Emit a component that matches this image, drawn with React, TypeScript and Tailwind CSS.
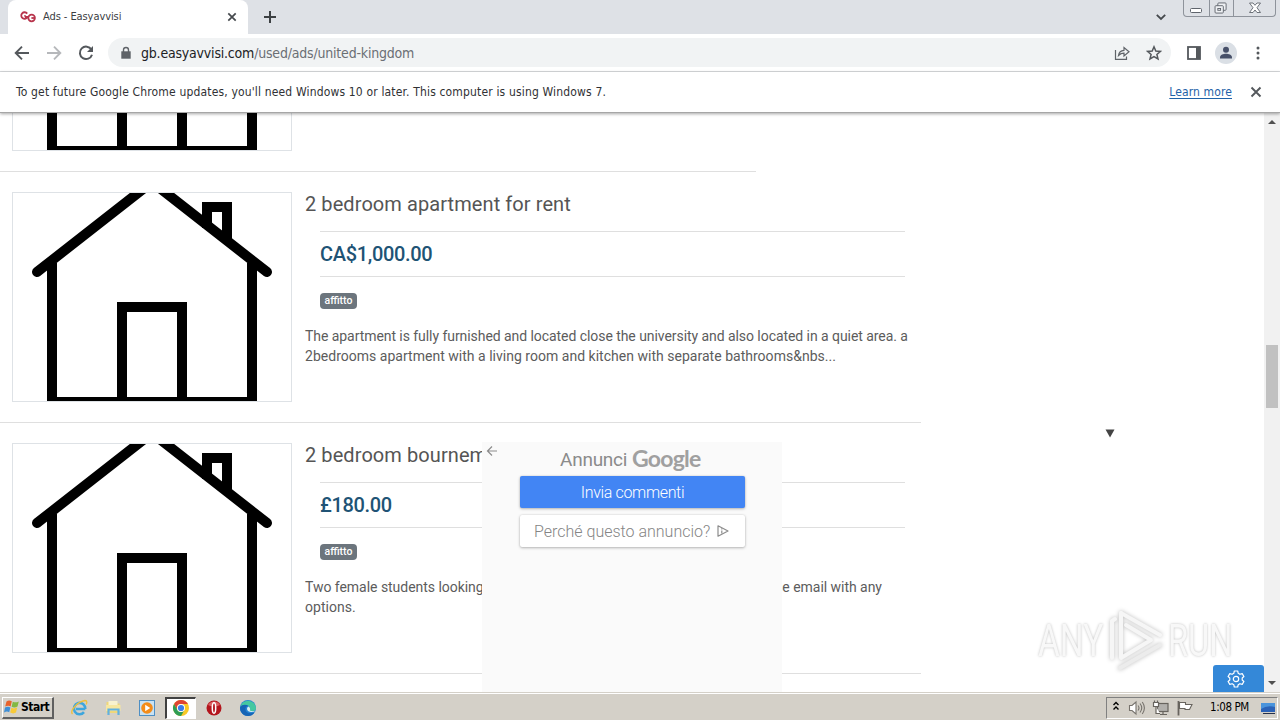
import type { ReactNode } from "react";
import { clsx } from "clsx";

interface Listing {
  title: string;
  price: string;
  tag: string;
  lines: string[];
}

const listings: Listing[] = [
  {
    title: "2 bedroom apartment for rent",
    price: "CA$1,000.00",
    tag: "affitto",
    lines: [
      "The apartment is fully furnished and located close the university and also located in a quiet area. a",
      "2bedrooms apartment with a living room and kitchen with separate bathrooms&nbs...",
    ],
  },
  {
    title: "2 bedroom bournemouth",
    price: "£180.00",
    tag: "affitto",
    lines: ["Two female students looking for a double  room to rent in Bournemouth, please email with any", "options."],
  },
];

function HousePicture() {
  return (
    <div className="h-[210px] w-[280px] shrink-0 border border-[#dee2e6] bg-white">
      <svg viewBox="1 1 278 208" className="block h-[208px] w-[278px]" fill="none" stroke="#000" strokeWidth="10">
        <path d="M40 71V210M240 71V210M35 210H245" />
        <path d="M110 210V115H170V210" />
        <path d="M195 36V15H215V50" />
        <path d="M25 80L140 -10L255 80" strokeLinecap="round" />
      </svg>
    </div>
  );
}

function ListingRow({ listing }: { listing: Listing }) {
  return (
    <div className="flex h-[251px] w-[921px] shrink-0 gap-[13px] border-b border-[#dfdfdf] pt-5 pl-3 font-[Roboto,sans-serif]">
      <HousePicture />
      <div className="w-[616px] whitespace-nowrap text-[#555]">
        <div className="h-6 text-[20px] leading-6 tracking-[0.08px]">{listing.title}</div>
        <div className="mt-[15px] mr-4 ml-[15px] h-[46px] border-y border-[#dfdfdf] text-[20px] leading-[44px] font-medium tracking-[-0.33px] text-[#205375]">
          {listing.price}
        </div>
        <div className="mx-[15px] mt-4 flex h-4">
          <span className="w-[37px] rounded bg-[#6c757d] text-center text-[10.5px] leading-[15px] font-medium text-white">{listing.tag}</span>
        </div>
        <div className="mt-[17px] text-[14px] leading-5 text-[#5c5c5c]">
          {listing.lines.map((line, index) => (
            <div key={line} className={clsx(index > 0 ? "tracking-[0.02px]" : line.length > 95 ? "tracking-[-0.06px]" : "tracking-[-0.035px]")}>
              {line}
            </div>
          ))}
        </div>
      </div>
    </div>
  );
}

function TabStrip() {
  return (
    <div className="flex h-[34px] shrink-0 bg-[#dee1e6] pl-2">
      <div className="flex h-[34px] w-[240px] items-center rounded-t-lg bg-white pr-[10px] pl-3">
        <svg viewBox="0 0 16 12" className="h-3 w-4" fill="none" stroke="#b8344c" strokeWidth="1.8">
          <path d="M7.2 2.6A3.3 3.3 0 1 0 7.6 5.8H4.8" />
          <circle cx="11.6" cy="7" r="3.3" />
          <path d="M11.4 7H15" />
          <circle cx="5" cy="4.8" r=".9" fill="#b8344c" stroke="none" />
        </svg>
        <span className="ml-[7px] flex-1 pt-px text-[11px] tracking-[-0.08px] text-[#3c4043]">Ads - Easyavvisi</span>
        <svg viewBox="0 0 12 12" className="h-3 w-3" stroke="#45494d" strokeWidth="1.7">
          <path d="M2.3 2.3L9.7 9.7M9.7 2.3L2.3 9.7" />
        </svg>
      </div>
      <svg viewBox="0 0 14 14" className="mt-[10px] ml-[15px] h-[14px] w-[14px]" stroke="#3c4043" strokeWidth="2">
        <path d="M7 1V13M1 7H13" />
      </svg>
      <svg viewBox="0 0 12 12" className="mt-[11px] ml-auto h-3 w-3" fill="none" stroke="#45494d" strokeWidth="1.8">
        <path d="M1.8 3.8L6 8L10.2 3.8" />
      </svg>
      <WindowButtons />
    </div>
  );
}

function WindowButtons() {
  return (
    <div className="mr-1 ml-4 flex h-[17px] w-[93px] rounded-b-[4px] border border-t-0 border-[#8e939b]">
      <svg viewBox="0 0 25 16" className="h-4 w-[25px]" fill="#fff" stroke="#5f646c">
        <rect x="6.5" y="8.5" width="11" height="4" rx="1" />
      </svg>
      <svg viewBox="0 0 25 16" className="h-4 w-[25px] border-x border-[#8e939b]" fill="#eef0f3" stroke="#5f646c">
        <rect x="8.5" y="2.5" width="9" height="8" rx="1" />
        <rect x="5.5" y="5.5" width="9" height="8" rx="1" />
        <rect x="8.5" y="8.5" width="3" height="2" />
      </svg>
      <svg viewBox="0 0 41 16" className="h-4 w-[41px]" fill="#fff" stroke="#5f646c" strokeWidth=".9">
        <path d="M15.5 3H19L21 5.3L23 3H26.5L23 7.7L26.5 12.5H23L21 10L19 12.5H15.5L19 7.7Z" />
      </svg>
    </div>
  );
}

function Toolbar() {
  return (
    <div className="flex h-[38px] shrink-0 items-center border-b border-[#d9dbde] bg-white">
      <svg viewBox="0 0 16 16" className="ml-[14px] h-4 w-4" fill="none" stroke="#54585c" strokeWidth="1.9">
        <path d="M15 8H2M8 1.7L1.7 8L8 14.3" />
      </svg>
      <svg viewBox="0 0 16 16" className="ml-4 h-4 w-4" fill="none" stroke="#b6b8bb" strokeWidth="1.9">
        <path d="M1 8H14M8 1.7L14.3 8L8 14.3" />
      </svg>
      <svg viewBox="0 0 16 16" className="ml-4 h-4 w-4" fill="none" stroke="#54585c" strokeWidth="2">
        <path d="M13.4 4.6A6.2 6.2 0 1 0 14 9.7" />
        <path d="M15 1V7H9Z" fill="#54585c" stroke="none" />
      </svg>
      <div className="ml-[14px] flex h-[29px] w-[1063px] items-center rounded-full bg-[#f1f3f4] pr-[9px] pl-3">
        <svg viewBox="0 0 12 14" className="h-[14px] w-3" fill="none" stroke="#5f6368" strokeWidth="1.4">
          <rect x="2" y="6" width="8" height="6" fill="#5f6368" />
          <path d="M3.5 6V4A2.5 2.5 0 0 1 8.5 4V6" />
        </svg>
        <span className="ml-[9px] flex-1 pt-px text-[14px] tracking-[-0.2px] text-[#6b6f74]">
          <span className="text-[#202124]">gb.easyavvisi.com</span>/used/ads/united-kingdom
        </span>
        <svg viewBox="0 0 16 16" className="h-4 w-4" fill="none" stroke="#5f6368" strokeWidth="1.2">
          <path d="M1.5 5V14.3H12.5V11.5" />
          <path d="M4.5 10.5C5 7 7 5.5 10 5.3V2.5L15 6.8L10 11V8.2C7.5 8.2 6 9 4.5 10.5Z" />
        </svg>
        <svg viewBox="0 0 16 16" className="ml-4 h-4 w-4" fill="none" stroke="#54585c" strokeWidth="1.5">
          <path d="M8 1.8L9.8 6L14.4 6.4L10.9 9.4L12 13.9L8 11.5L4 13.9L5.1 9.4L1.6 6.4L6.2 6Z" />
        </svg>
      </div>
      <svg viewBox="0 0 14 14" className="ml-4 h-[14px] w-[14px]" fill="none" stroke="#54585c" strokeWidth="1.8">
        <rect x="1" y="1" width="12" height="12" />
        <path d="M11 1V13" strokeWidth="4" />
      </svg>
      <svg viewBox="0 0 22 22" className="ml-[14px] h-[22px] w-[22px]">
        <circle cx="11" cy="11" r="11" fill="#dadfe5" />
        <circle cx="11" cy="7.8" r="3" fill="#475069" />
        <path d="M5 16.5V15.3C5 12.8 8.5 11.8 11 11.8S17 12.8 17 15.3V16.5Z" fill="#475069" />
      </svg>
      <svg viewBox="0 0 4 14" className="ml-[19px] h-[14px] w-1" fill="#54585c">
        <circle cx="2" cy="2" r="1.5" />
        <circle cx="2" cy="7" r="1.5" />
        <circle cx="2" cy="12" r="1.5" />
      </svg>
    </div>
  );
}

function InfoBar() {
  return (
    <div className="relative z-10 flex h-[41px] shrink-0 items-center border-b border-[#a6a6a6] bg-white pr-[18px] pl-4 text-[12px] text-[#303134] shadow-[0_1px_3px_rgba(0,0,0,0.35)]">
      <span className="flex-1 tracking-[0.16px]">
        To get future Google Chrome updates, you'll need Windows 10 or later. This computer is using Windows 7.
      </span>
      <span className="tracking-[0.12px] text-[#1f62a8] underline underline-offset-2">Learn more</span>
      <svg viewBox="0 0 12 12" className="ml-[18px] h-3 w-3" stroke="#54585c" strokeWidth="1.9">
        <path d="M1.5 1.5L10.5 10.5M10.5 1.5L1.5 10.5" />
      </svg>
    </div>
  );
}

function AdOverlay() {
  return (
    <div className="absolute top-[329px] left-[482px] h-[250px] w-[300px] bg-[#fafafa] font-[Roboto,sans-serif]">
      <svg viewBox="0 0 12 12" className="absolute top-[3px] left-1 h-3 w-3" fill="none" stroke="#8c8c8c" strokeWidth="1.2">
        <path d="M11 6H1.5M6 1.5L1.5 6L6 10.5" />
      </svg>
      <div className="flex h-[34px] items-center pl-[78px] text-[#8b8b8b]">
        <span className="mt-[2px] w-[72px] text-[19px] leading-6 tracking-[-0.25px]">Annunci</span>
        <span className="-mt-[2px] font-[Lato,sans-serif] text-[23px] leading-6 font-bold tracking-[-0.75px] text-[#a0a0a0]">Google</span>
      </div>
      <div className="mr-[37px] ml-[38px] h-8 rounded-[2px] bg-[#4285f4] text-center text-[16px] leading-[33px] font-light tracking-[-0.35px] text-white shadow-[0_0_2px_rgba(0,0,0,0.12),0_1px_3px_rgba(0,0,0,0.26)]">
        Invia commenti
      </div>
      <div className="mt-[7px] mr-[37px] ml-[38px] flex h-8 items-center rounded-[2px] bg-white pl-[14px] text-[16px] font-light text-[#858585] shadow-[0_0_2px_rgba(0,0,0,0.12),0_1px_3px_rgba(0,0,0,0.26)]">
        <span className="mt-px w-[183px] whitespace-nowrap">Perché questo annuncio?</span>
        <svg viewBox="0 0 12 12" className="h-3 w-3" fill="none" stroke="#8c8c8c" strokeWidth="1.2">
          <path d="M1 .8L11 6L1 11.2Z" strokeLinejoin="round" />
          <path d="M4.8 3.3V4.5M4.8 5.5V8.5" />
        </svg>
      </div>
    </div>
  );
}

function Watermark() {
  return (
    <div className="absolute top-[496px] left-[1038px] flex h-[64px] w-[196px] items-center justify-between font-[Roboto,sans-serif] text-[44px] leading-[64px] text-[#f8f8f8] [text-shadow:0_0_3px_#bcbcbc]">
      <span className="w-[66px] origin-left scale-x-[0.76]">ANY</span>
      <svg
        viewBox="0 0 60 64"
        className="-mt-[2px] -ml-[6px] h-16 w-[60px] shrink-0 drop-shadow-[0_0_2px_#bcbcbc]"
        fill="none"
        stroke="#f6f6f6"
        strokeWidth="4"
        strokeLinecap="round"
        strokeLinejoin="round"
      >
        <path d="M9 13V50M9 13L12 11" />
        <path d="M18 5V50L48 32L23 17" />
        <path d="M18 5L57 27" />
        <path d="M17 60L57 37" stroke="#ececec" />
      </svg>
      <span className="w-[66px] origin-left scale-x-[0.74]">RUN</span>
    </div>
  );
}

function ScrollBar() {
  return (
    <div className="flex w-4 shrink-0 flex-col items-center bg-[#f1f1f1]">
      <svg viewBox="0 0 16 17" className="h-[17px] w-4" fill="#505050">
        <path d="M4 11L8 7L12 11Z" />
      </svg>
      <div className="mt-[215px] h-[63px] w-3 bg-[#c1c1c1]" />
      <svg viewBox="0 0 16 17" className="mt-auto h-[17px] w-4" fill="#505050">
        <path d="M4 6L8 10L12 6Z" />
      </svg>
    </div>
  );
}

function TaskButton({ active, children }: { active?: boolean; children: ReactNode }) {
  return (
    <div
      className={clsx(
        "flex h-[22px] w-[31px] items-center justify-center",
        active && "border-t-2 border-r border-b border-l-2 border-t-[#404040] border-r-white border-b-white border-l-[#404040] bg-white",
      )}
    >
      <svg viewBox="0 0 18 18" className="h-[18px] w-[18px] shrink-0" fill="none">
        {children}
      </svg>
    </div>
  );
}

function TaskBar() {
  return (
    <div className="flex h-7 shrink-0 items-center border-t border-[#d4d0c8] bg-[#d4d0c8] pl-[2px] text-[11px] text-black shadow-[inset_0_1px_0_#fff]">
      <div className="mt-[2px] flex h-[22px] w-[52px] items-center border-t border-r-2 border-b-2 border-l border-t-white border-r-[#606060] border-b-[#606060] border-l-white pl-px">
        <svg viewBox="0 0 16 16" className="h-4 w-4 shrink-0">
          <path d="M2.5 2.5C4.5 1 6 1.3 7.8 2.3L6.6 7.5C5 6.5 3.3 6.6 1.2 7.6Z" fill="#e8632c" />
          <path d="M8.8 2.7C11 3.7 12.5 3.5 14.8 2.5L13.5 7.6C11.5 8.7 9.5 8.7 7.6 7.8Z" fill="#83b844" />
          <path d="M1 8.5C3 7.5 4.7 7.4 6.4 8.4L5.2 13.2C3.5 12.3 2 12.4 0 13.5Z" fill="#3f8fd6" />
          <path d="M7.4 8.8C9.3 9.7 11 9.6 13.2 8.6L12 13.6C10 14.7 8.2 14.6 6.2 13.6Z" fill="#f8ca39" />
        </svg>
        <span className="ml-px text-[12px] font-bold tracking-[-0.5px]">Start</span>
      </div>
      <div className="mt-[2px] ml-[10px] flex">
        <TaskButton>
          <path d="M14.3 10H5M14.3 10A5.7 5.7 0 1 0 13 13.2" stroke="#3ea6dd" strokeWidth="2.6" />
          <path d="M1.5 15C-1.5 12 6.5 2.5 14 1.5C16.5 1.5 16 4 15 5.5" stroke="#efbf3c" strokeWidth="1.3" />
        </TaskButton>
        <div className="w-[3px]" />
        <TaskButton>
          <path d="M1.5 3H6.5L8 4.5H14.5V14H1.5Z" fill="#efd77a" />
          <path d="M3.5 2H12.5V6H3.5Z" fill="#f9f2cf" />
          <path d="M1 6H15.5V12H1Z" fill="#f7e7a0" />
          <path d="M3.5 16V10.5H13.5V16" stroke="#62b1df" strokeWidth="2.2" />
        </TaskButton>
        <div className="w-[2px]" />
        <TaskButton>
          <rect x="1.5" y="1.5" width="15" height="15" fill="#c9e2f3" stroke="#4e8fc4" />
          <circle cx="9" cy="9" r="5.8" fill="#f38c1a" />
          <path d="M7.2 5.8L12.2 9L7.2 12.2Z" fill="#fff" />
        </TaskButton>
        <div className="w-[3px]" />
        <TaskButton active>
          <circle cx="9" cy="9" r="8" fill="#f9c925" />
          <path d="M2.07 5A8 8 0 0 1 15.93 5H9A4 4 0 0 0 5.5 11Z" fill="#df4433" />
          <path d="M2.07 5A8 8 0 0 0 9 17L12.5 11A4 4 0 0 1 5.5 11Z" fill="#2f9d55" />
          <circle cx="9" cy="9" r="4" fill="#fff" />
          <circle cx="9" cy="9" r="3.1" fill="#3b7de8" />
        </TaskButton>
        <div className="w-[2px]" />
        <TaskButton>
          <circle cx="9" cy="9" r="7.5" fill="#b3151d" />
          <path d="M3 6A7 7 0 0 1 15 6Q9 9 3 6Z" fill="#dc6062" />
          <ellipse cx="9" cy="9" rx="1.7" ry="5.2" fill="#b3151d" stroke="#fff" strokeWidth="1.5" />
        </TaskButton>
        <div className="w-[3px]" />
        <TaskButton>
          <circle cx="9" cy="9" r="8" fill="#2382d3" />
          <path d="M1.2 8A8 8 0 0 1 17 9C17 12 13 13 10.8 11.5C12 9 10 6 6.5 6C4 6 2 7 1.2 8Z" fill="#45c8a0" />
          <path d="M1.2 8C3 5.5 7 5 9.5 7C7 7 6 9 6.5 11C7.5 14.5 12 15 15.5 13.5C13 17.5 8 17.8 5 15.9C1.5 13.5 .8 10.5 1.2 8Z" fill="#1664b5" />
          <path d="M10.8 11.5C11.6 10 11 8 9.5 7.4C7.8 8 7.5 10.5 9 12C11.5 14 15 13 16.5 11.5C14.5 12.5 12.5 12.5 10.8 11.5Z" fill="#d9eef0" />
        </TaskButton>
      </div>
      <div className="mt-[2px] mr-[2px] ml-auto flex h-[22px] w-[172px] items-center border border-t-[#808080] border-r-white border-b-white border-l-[#808080] pl-[5px]">
        <svg viewBox="0 0 8 12" className="-mt-1 h-3 w-2" fill="none" stroke="#000" strokeWidth="1.4">
          <path d="M1.5 5L4 2.5L6.5 5M1.5 9.5L4 7L6.5 9.5" />
        </svg>
        <svg viewBox="0 0 18 16" className="ml-[8px] h-4 w-[18px]" fill="#fff" stroke="#77736d" strokeWidth="1.1">
          <path d="M1.5 5.5H4L8 2V14L4 10.5H1.5Z" />
          <path d="M10 5.5Q12 8 10 10.5M12 3.5Q15.5 8 12 12.5M14.3 2Q18.5 8 14.3 14" fill="none" />
        </svg>
        <svg viewBox="0 0 18 16" className="ml-[6px] h-4 w-[18px]" fill="#fff" stroke="#68645e" strokeWidth="1.2">
          <rect x="5.5" y="3.5" width="10.5" height="8" fill="#b2b0ac" />
          <path d="M8 14.5H15M11 12V14" />
          <path d="M1.5 2.5H6.5V6.5H1.5ZM2.5 .5V2.5M5.5 .5V2.5M4 6.5V13.5H8" />
        </svg>
        <svg viewBox="0 0 18 16" className="ml-[6px] h-4 w-[18px]" fill="#fff" stroke="#68645e" strokeWidth="1.1">
          <path d="M2.5 1V15.5" strokeWidth="1.8" />
          <path d="M3.5 2.5H9.5V4.5H16L13.5 9.5H9V8.5H3.5Z" />
        </svg>
        <span className="ml-[16px] w-[44px] text-[11.5px] whitespace-nowrap tracking-[-0.4px]">1:08 PM</span>
        <svg viewBox="0 0 16 14" className="ml-[6px] h-[14px] w-4 shrink-0">
          <path d="M1 2H15V11H1Z" fill="#2b62b7" />
          <path d="M1 8Q7 4 15 6V2H1Z" fill="#4a94dc" />
          <path d="M3 12H15V13H3Z" fill="#25304b" />
        </svg>
      </div>
    </div>
  );
}

export default function App() {
  return (
    <div className="flex h-[720px] w-[1280px] flex-col overflow-hidden bg-white font-['DejaVu_Sans_Condensed','DejaVu_Sans',sans-serif]">
      <TabStrip />
      <Toolbar />
      <InfoBar />
      <div className="relative flex h-[579px] shrink-0 overflow-hidden">
        <main className="flex h-[579px] flex-1 flex-col overflow-hidden">
          {/* bottom edge of the previous listing */}
          <div className="flex h-[59px] w-[756px] shrink-0 items-end overflow-hidden border-b border-[#dfdfdf] pb-5 pl-3">
            <HousePicture />
          </div>
          {listings.map((listing) => (
            <ListingRow key={listing.title} listing={listing} />
          ))}
        </main>
        <ScrollBar />
        <AdOverlay />
        <svg viewBox="0 0 10 9" className="absolute top-[316px] left-[1105px] h-[9px] w-[10px]" fill="#444">
          <path d="M.5 .5H9.5L5 8.5Z" />
        </svg>
        <Watermark />
        <div className="absolute top-[552px] left-[1213px] flex h-[27px] w-[51px] items-center justify-center rounded-t-[3px] bg-[#3488d8]">
          <svg viewBox="0 0 18 18" className="-ml-[5px] h-[18px] w-[18px]" fill="none" stroke="#fff" strokeWidth="1.2" strokeLinejoin="round">
            <path d="M7.3 1H10.7L11.2 3.3L12.9 4.3L15.2 3.6L16.9 6.5L15.2 8V10L16.9 11.5L15.2 14.4L12.9 13.7L11.2 14.7L10.7 17H7.3L6.8 14.7L5.1 13.7L2.8 14.4L1.1 11.5L2.8 10V8L1.1 6.5L2.8 3.6L5.1 4.3L6.8 3.3Z" />
            <circle cx="9" cy="9" r="2.7" />
          </svg>
        </div>
      </div>
      <TaskBar />
    </div>
  );
}
